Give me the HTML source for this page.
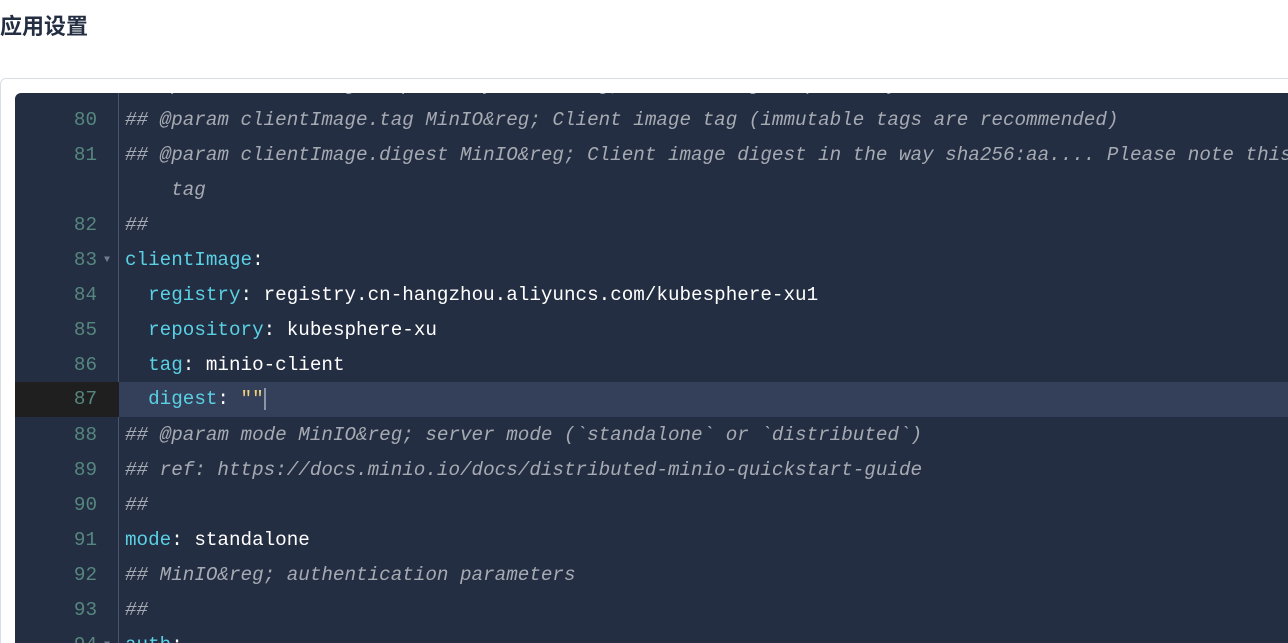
<!DOCTYPE html>
<html><head><meta charset="utf-8"><style>
*{margin:0;padding:0;box-sizing:border-box}
html,body{width:1288px;height:643px;overflow:hidden}
body{background:#fff;position:relative;font-family:"Liberation Sans","Noto Sans CJK SC",sans-serif}
h1{position:absolute;left:0;top:12px;font-size:22px;font-weight:bold;color:#242e42;line-height:30px}
.card{position:absolute;left:0;top:78px;width:1300px;height:565px;border:1px solid #d8dee5;border-bottom:none;border-radius:6px 0 0 0}
.ed{position:absolute;left:15px;top:93px;width:1273px;height:550px;background:#242e42;border-radius:6px 0 0 0;overflow:hidden}
.gut{position:absolute;left:0;top:0;width:104px;height:100%;border-right:1px solid #4a5568}
.row{position:absolute;left:0;height:35px;width:1290px;font-family:"Liberation Mono",monospace;font-size:19.25px;line-height:35px;white-space:pre}
.n{position:absolute;left:0;width:82px;text-align:right;color:#55877f}
.t{position:absolute;left:110px;color:#fff}
.c{color:#a6aab2;font-style:italic}
.k{color:#5ad0e4}
.s{color:#f0d07a}
.hl{background:#34405a}
.hl .n{background:#1f1f1f;width:104px;padding-right:22px}
.arr{position:absolute;left:89px;color:#6f7c8c;font-size:10px}
</style></head><body>
<h1>应用设置</h1>
<div class="card"></div>
<div class="ed">
<div class="gut"></div>
<div class="row" style="top:-25px"><span class="n">79</span><span class="t c">## @param clientImage.repository MinIO&amp;reg; Client image repository</span></div>
<div class="row" style="top:10px"><span class="n">80</span><span class="t c">## @param clientImage.tag MinIO&amp;reg; Client image tag (immutable tags are recommended)</span></div>
<div class="row" style="top:45px"><span class="n">81</span><span class="t c">## @param clientImage.digest MinIO&amp;reg; Client image digest in the way sha256:aa.... Please note this</span></div>
<div class="row" style="top:80px"><span class="t c">    tag</span></div>
<div class="row" style="top:115px"><span class="n">82</span><span class="t c">##</span></div>
<div class="row" style="top:150px"><span class="n">83</span><span class="arr">▼</span><span class="t"><span class="k">clientImage</span>:</span></div>
<div class="row" style="top:185px"><span class="n">84</span><span class="t">  <span class="k">registry</span>: registry.cn-hangzhou.aliyuncs.com/kubesphere-xu1</span></div>
<div class="row" style="top:220px"><span class="n">85</span><span class="t">  <span class="k">repository</span>: kubesphere-xu</span></div>
<div class="row" style="top:255px"><span class="n">86</span><span class="t">  <span class="k">tag</span>: minio-client</span></div>
<div class="row hl" style="top:289px"><span class="n">87</span><span class="t">  <span class="k">digest</span>: <span class="s">""</span><span style="border-left:2px solid #8a96a8"></span></span></div>
<div class="row" style="top:325px"><span class="n">88</span><span class="t c">## @param mode MinIO&amp;reg; server mode (`standalone` or `distributed`)</span></div>
<div class="row" style="top:360px"><span class="n">89</span><span class="t c">## ref: https://docs.minio.io/docs/distributed-minio-quickstart-guide</span></div>
<div class="row" style="top:395px"><span class="n">90</span><span class="t c">##</span></div>
<div class="row" style="top:430px"><span class="n">91</span><span class="t"><span class="k">mode</span>: standalone</span></div>
<div class="row" style="top:465px"><span class="n">92</span><span class="t c">## MinIO&amp;reg; authentication parameters</span></div>
<div class="row" style="top:500px"><span class="n">93</span><span class="t c">##</span></div>
<div class="row" style="top:535px"><span class="n">94</span><span class="arr">▼</span><span class="t"><span class="k">auth</span>:</span></div>
</div>
</body></html>
